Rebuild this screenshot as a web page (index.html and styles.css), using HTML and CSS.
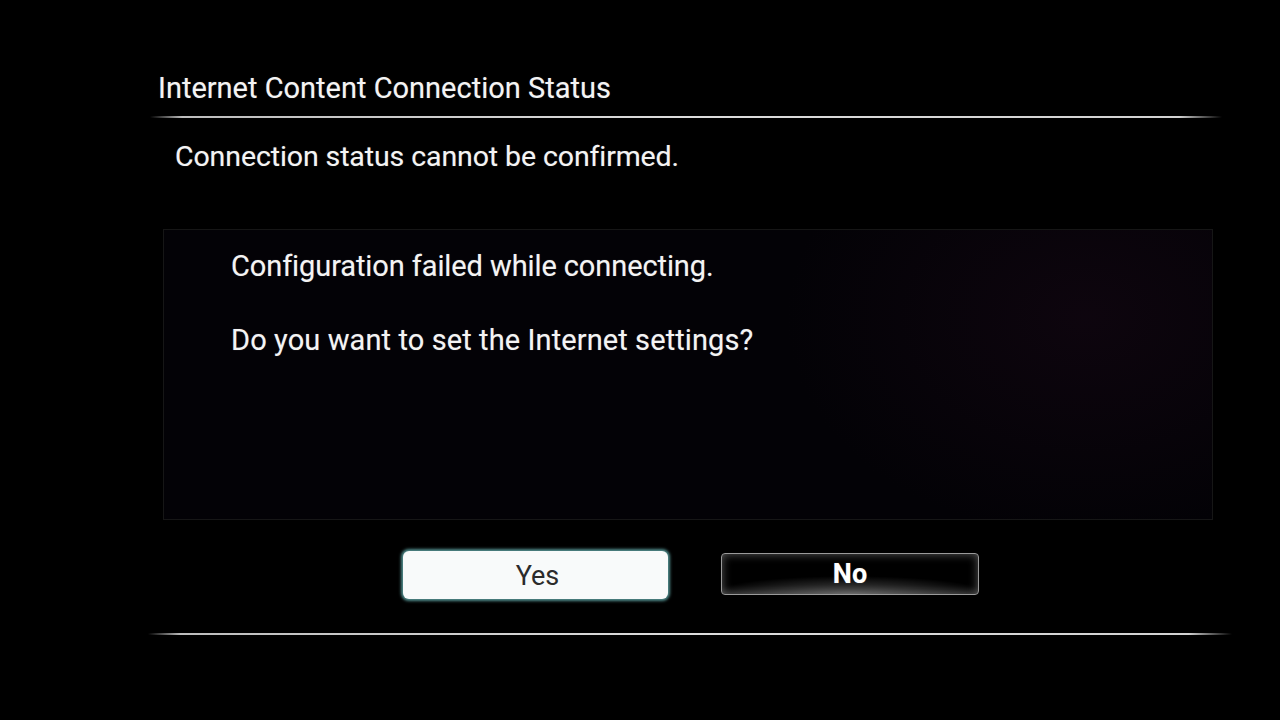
FILE: index.html
```html
<!DOCTYPE html>
<html>
	<head>
		<meta charset="UTF-8">
		<title>Internet Content Connection Status</title>
		<link rel="stylesheet" href="styles.css">
	</head>
	<body>
		<div class="dialog">
			<h1 class="title">Internet Content Connection Status</h1>
			<div class="rule"></div>
			<p class="status">Connection status cannot be confirmed.</p>
			<div class="panel">
				<p class="msg">Configuration failed while connecting.</p>
				<p class="msg msg-ask">Do you want to set the Internet settings?</p>
			</div>
			<div class="btns">
				<a href="javascript:;" class="btn btn-yes">Yes</a>
				<a href="javascript:;" class="btn btn-no">No</a>
			</div>
			<div class="rule rule-bottom"></div>
		</div>
	</body>
</html>
```

FILE: styles.css
```css
*{
	margin:0;padding:0;
}
html,body{
	background:#000;
	height:100%;
}
body{
	font-family: Roboto, "DejaVu Sans", sans-serif;
	color:#f4f4f4;
	overflow:hidden;
	text-shadow:0 0 1px rgba(255,255,255,.35);
}
/*外框*/
.dialog{
	width:1072px;
	margin-left:150px;
	padding-top:72px;
}
.title{
	font-size:29px;
	font-weight:normal;
	line-height:32px;
	padding-left:8px;
}
/*分隔线*/
.rule{
	height:2px;
	margin-top:12px;
	background: linear-gradient(to right, rgba(200,200,200,0) 0, #bdbdbd 3%, #dcdcdc 50%, #d2d2d2 96%, rgba(200,200,200,0) 100%);
}
.status{
	font-size:28.5px;
	letter-spacing:-0.1px;
	line-height:32px;
	padding-left:25px;
	margin-top:23px;
}
/*信息面板*/
.panel{
	height:291px;
	margin:56px 9px 0 13px;
	border:1px solid #161616;
	background:
		radial-gradient(ellipse 300px 220px at 88% 30%, rgba(24,8,22,.5), rgba(0,0,0,0)),
		#030206;
	padding-top:20px;
	box-sizing:border-box;
}
.msg{
	font-size:29px;
	line-height:32px;
	padding-left:67px;
	letter-spacing:-0.1px;
}
.msg + .msg{
	margin-top:42px;
}
.msg-ask{
	letter-spacing:0.1px;
}
/*按钮*/
.btns{
	display:flex;
	align-items:center;
	gap:53px;
	padding-left:253px;
	margin-top:31px;
	height:48px;
}
.btn{
	display:flex;
	align-items:center;
	justify-content:center;
	text-decoration:none;
	font-size:27px;
	box-sizing:border-box;
}
.btn-yes{
	width:265px;
	height:48px;
	background:#f8fafa;
	color:#2b2b2b;
	text-shadow:none;
	border-radius:6px;
	box-shadow:0 0 3px 2px rgba(110,190,190,.75);
	padding:2px 0 0 4px;
}
.btn-no{
	width:258px;
	height:42px;
	margin-top:-3px;
	color:#fff;
	font-weight:bold;
	border:1px solid #9a9a9a;
	border-radius:4px;
	background:
		radial-gradient(ellipse 55% 45% at 50% 100%, rgba(255,255,255,.3), rgba(255,255,255,0)),
		#000;
	box-shadow:inset 0 0 10px rgba(255,255,255,.35);
}
.rule-bottom{
	margin-top:34px;
	margin-left:-2px;
	margin-right:-10px;
}
```
